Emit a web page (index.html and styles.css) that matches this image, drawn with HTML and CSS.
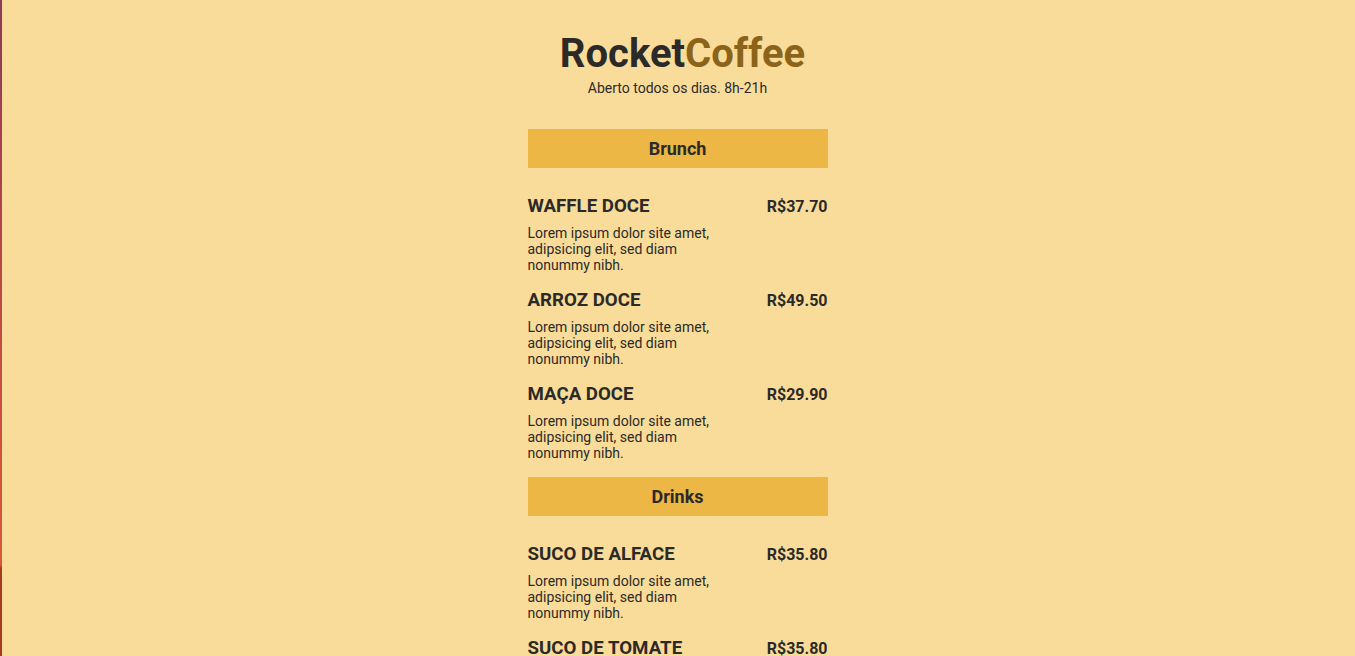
FILE: index.html
```html
<!DOCTYPE html>
<html lang="pt-BR">
<head>
<meta charset="utf-8">
<title>RocketCoffee</title>
<link rel="stylesheet" href="styles.css">
</head>
<body>
<main class="menu">
  <header class="menu-header">
    <h1 class="brand">Rocket<span class="brand-accent">Coffee</span></h1>
    <p class="hours">Aberto todos os dias. 8h-21h</p>
  </header>

  <section class="category">
    <h2 class="category-title">Brunch</h2>
    <ul class="items">
      <li class="item">
        <div class="item-head"><h3 class="item-name">Waffle doce</h3><span class="item-price">R$37.70</span></div>
        <p class="item-desc">Lorem ipsum dolor site amet, adipsicing elit, sed diam nonummy nibh.</p>
      </li>
      <li class="item">
        <div class="item-head"><h3 class="item-name">Arroz doce</h3><span class="item-price">R$49.50</span></div>
        <p class="item-desc">Lorem ipsum dolor site amet, adipsicing elit, sed diam nonummy nibh.</p>
      </li>
      <li class="item">
        <div class="item-head"><h3 class="item-name">Maça doce</h3><span class="item-price">R$29.90</span></div>
        <p class="item-desc">Lorem ipsum dolor site amet, adipsicing elit, sed diam nonummy nibh.</p>
      </li>
    </ul>
  </section>

  <section class="category">
    <h2 class="category-title">Drinks</h2>
    <ul class="items">
      <li class="item">
        <div class="item-head"><h3 class="item-name">Suco de alface</h3><span class="item-price">R$35.80</span></div>
        <p class="item-desc">Lorem ipsum dolor site amet, adipsicing elit, sed diam nonummy nibh.</p>
      </li>
      <li class="item">
        <div class="item-head"><h3 class="item-name">Suco de tomate</h3><span class="item-price">R$35.80</span></div>
        <p class="item-desc">Lorem ipsum dolor site amet, adipsicing elit, sed diam nonummy nibh.</p>
      </li>
    </ul>
  </section>
</main>
</body>
</html>
```
FILE: styles.css
```css
* { box-sizing: border-box; }

html, body { height: 100%; }

body {
  margin: 0;
  background: #fadc9a;
  color: #2b2a28;
  font-family: Roboto, "Liberation Sans", sans-serif;
  border-left: 2px solid transparent;
  border-right: 2px solid #f3e6cc;
  border-image: linear-gradient(180deg, #8d3a58 0%, #c24a44 50%, #dc573a 86%, #a63a22 86.5%, #a33a20 100%) 1;
  border-image-width: 0 0 0 2px;
  overflow: hidden;
}

.menu {
  width: 300px;
  margin: 0 auto;
  padding-top: 32px;
}

.menu-header { text-align: center; }

.brand {
  margin: 0;
  padding-left: 10px;
  font-size: 40px;
  line-height: 44px;
  font-weight: 700;
  color: #2b2a28;
}

.brand-accent { color: #8b6419; }

.hours {
  margin: 4px 0 0;
  font-size: 14px;
  line-height: 16px;
}

.category { margin-top: 33px; }
.category + .category { margin-top: 0; }

.category-title {
  margin: 0;
  background: #edb746;
  text-align: center;
  font-size: 18px;
  line-height: 23px;
  padding: 8px 0;
  font-weight: 700;
}

.items {
  list-style: none;
  margin: 0;
  padding: 27px 0 0;
}

.item { padding-bottom: 16px; }

.item-head {
  display: flex;
  justify-content: space-between;
  align-items: baseline;
}

.item-name {
  margin: 0;
  font-size: 18.7px;
  line-height: 22px;
  font-weight: 700;
  text-transform: uppercase;
}

.item-price {
  font-size: 16px;
  font-weight: 700;
}

.item-desc {
  margin: 8px 0 0;
  max-width: 200px;
  font-size: 14px;
  line-height: 16px;
}
```
